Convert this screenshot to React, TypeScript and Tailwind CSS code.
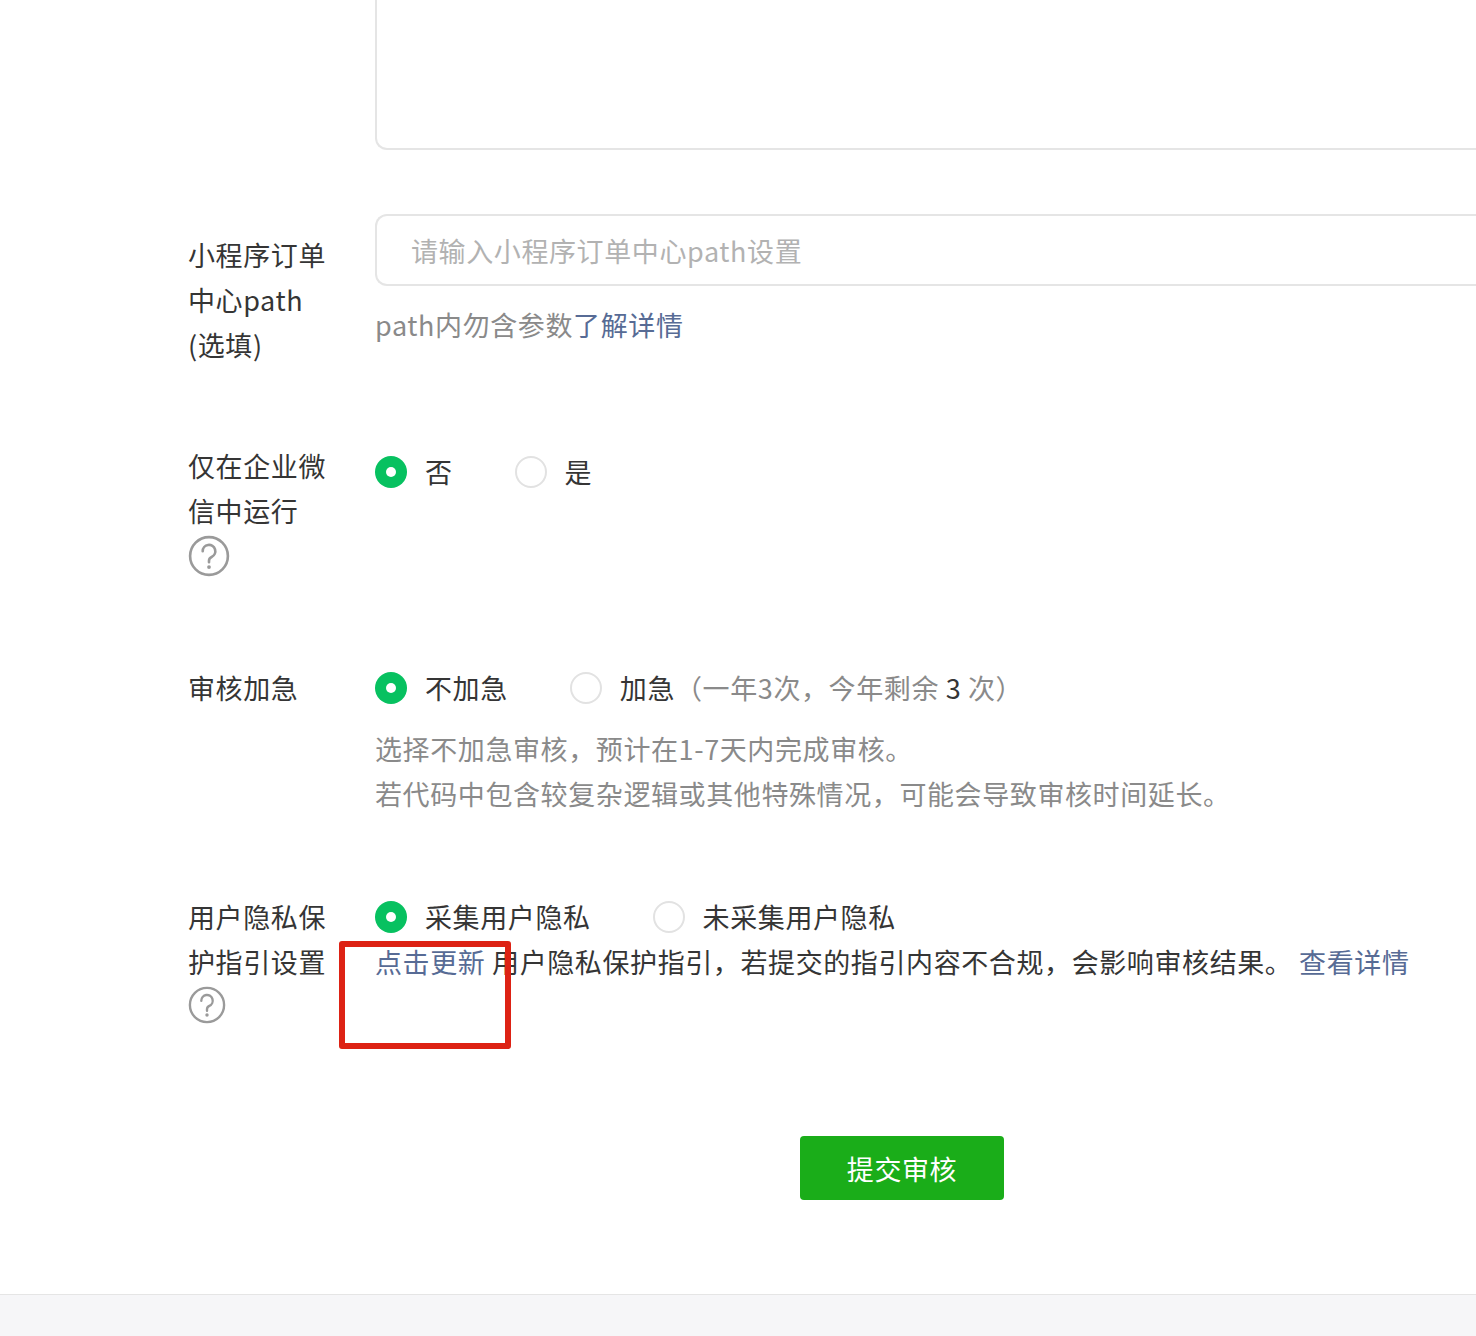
const font = { fontFamily: '"Noto Sans CJK SC", "Noto Sans", sans-serif' }

function Radio({ checked }: { checked?: boolean }) {
  return checked ? (
    <span className="inline-flex h-[32px] w-[32px] shrink-0 items-center justify-center rounded-full bg-[#07c160]">
      <span className="h-[10px] w-[10px] rounded-full bg-white" />
    </span>
  ) : (
    <span className="inline-block h-[32px] w-[32px] shrink-0 rounded-full border-2 border-[#e2e2e2] bg-white" />
  )
}

function Help({ size }: { size: number }) {
  return (
    <svg width={size} height={size} viewBox="0 0 40 40" className="mt-[2px]">
      <circle cx="20" cy="20" r="18" fill="none" stroke="#9a9a9a" strokeWidth="2.5" />
      <path d="M14 15.5a6 6 0 1 1 8.5 5.4c-1.7.8-2.5 1.8-2.5 3.6v1.5" fill="none" stroke="#9a9a9a" strokeWidth="2.5" strokeLinecap="round" />
      <circle cx="20" cy="30.5" r="1.8" fill="#9a9a9a" />
    </svg>
  )
}

export default function App() {
  return (
    <div className="relative min-h-[1336px] w-[1476px] overflow-hidden bg-white text-[27px] leading-[45px] tracking-[0.6px] text-[#353535]" style={font}>
      <div className="ml-[375px] h-[150px] rounded-bl-[12px] border-b-2 border-l-2 border-[#e5e5e5]" />

      <div className="flex pl-[188px] pt-[64px]">
        <div className="w-[187px] pt-[18px]">小程序订单<br />中心path<br />(选填)</div>
        <div className="flex-1">
          <div className="flex h-[72px] items-center rounded-l-[12px] border-2 border-r-0 border-[#e5e5e5] pl-[34px] text-[#b2b2b2]">请输入小程序订单中心path设置</div>
          <div className="mt-[16px] text-[#8a8a8a]">path内勿含参数<span className="text-[#576b95]">了解详情</span></div>
        </div>
      </div>

      <div className="flex pl-[188px] pt-[76px]">
        <div className="w-[187px]">仅在企业微<br />信中运行<Help size={42} /></div>
        <div className="flex flex-1 items-start gap-[62px] pt-[6px]">
          <label className="flex items-center gap-[18px]"><Radio checked />否</label>
          <label className="flex items-center gap-[18px]"><Radio />是</label>
        </div>
      </div>

      <div className="flex pl-[188px] pt-[88px]">
        <div className="w-[187px]">审核加急</div>
        <div className="flex-1">
          <div className="flex items-center gap-[62px]">
            <label className="flex items-center gap-[18px]"><Radio checked />不加急</label>
            <label className="flex items-center gap-[18px]"><Radio /><span>加急<span className="text-[#8a8a8a]">（一年3次，今年剩余 <span className="text-[#353535]">3</span> 次）</span></span></label>
          </div>
          <div className="mt-[16px] text-[#8a8a8a]">选择不加急审核，预计在1-7天内完成审核。<br />若代码中包含较复杂逻辑或其他特殊情况，可能会导致审核时间延长。</div>
        </div>
      </div>

      <div className="flex pl-[188px] pt-[78px]">
        <div className="w-[187px]">用户隐私保<br />护指引设置<Help size={38} /></div>
        <div className="flex-1">
          <div className="flex items-center gap-[62px]">
            <label className="flex items-center gap-[18px]"><Radio checked />采集用户隐私</label>
            <label className="flex items-center gap-[18px]"><Radio />未采集用户隐私</label>
          </div>
          <div><span className="text-[#576b95]">点击更新</span> 用户隐私保护指引，若提交的指引内容不合规，会影响审核结果。 <span className="text-[#576b95]">查看详情</span></div>
        </div>
      </div>

      <div className="flex justify-center pl-[328px] pt-[112px]">
        <button className="h-[64px] w-[204px] rounded-[4px] bg-[#1aad19] text-[27px] text-white">提交审核</button>
      </div>

      <div className="absolute bottom-0 left-0 h-[42px] w-full border-t border-[#e5e5e5] bg-[#f6f6f8]" />
      <div className="absolute left-[339px] top-[941px] h-[108px] w-[172px] rounded-[3px] border-[6px] border-[#dd2214]" />
    </div>
  )
}
